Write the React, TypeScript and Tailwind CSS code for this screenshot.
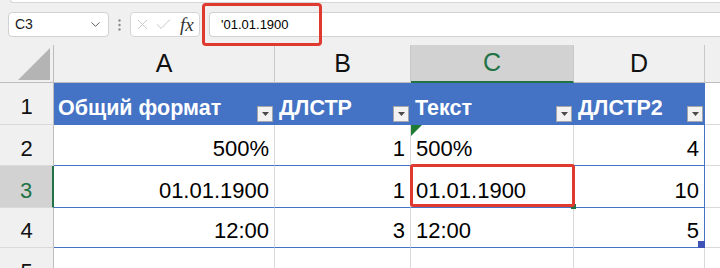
import { ChevronDown, X, Check } from "lucide-react";

const headers = ["Общий формат", "ДЛСТР", "Текст", "ДЛСТР2"];
const rows = [
  ["500%", "1", "500%", "4"],
  ["01.01.1900", "1", "01.01.1900", "10"],
  ["12:00", "3", "12:00", "5"],
];
const letters = ["A", "B", "C", "D"];
const rowHeights = ["h-[41px]", "h-[42px]", "h-[40px]"];

function FilterButton() {
  return (
    <div className="w-[16px] h-[16px] mb-[3px] mr-[2px] shrink-0 bg-[#f2f2f2] border border-[#a6a6a6] flex items-center justify-center">
      <svg width="7" height="4" viewBox="0 0 7 4">
        <path d="M0 0 L7 0 L3.5 4 Z" fill="#4a4a4a" />
      </svg>
    </div>
  );
}

export default function App() {
  return (
    <div
      className="relative w-[720px] h-[268px] overflow-hidden bg-white"
      style={{ fontFamily: '"Liberation Sans", Arial, sans-serif' }}
    >
      {/* formula bar */}
      <div className="h-[45px] bg-[#f0f0f0]">
        <div className="h-[3px] ml-[10px] bg-white border-b border-l border-[#d6d6d6] rounded-bl-[4px]" />
        <div className="flex mt-[9px] pl-[8px] h-[25px]">
          <div className="w-[101px] h-[25px] bg-white border border-[#d1d1d1] rounded-[4px] flex items-center justify-between pl-[6px] pr-[5px]">
            <span className="text-[14px] text-[#1a1a1a]">C3</span>
            <ChevronDown size={15} strokeWidth={1.5} color="#555" />
          </div>
          <div className="w-[21px] flex items-center justify-center">
            <svg width="3" height="12" viewBox="0 0 3 12">
              <circle cx="1.5" cy="1.5" r="1.2" fill="#8c8c8c" />
              <circle cx="1.5" cy="6" r="1.2" fill="#8c8c8c" />
              <circle cx="1.5" cy="10.5" r="1.2" fill="#8c8c8c" />
            </svg>
          </div>
          <div className="w-[70px] h-[25px] bg-white border border-[#d6d6d6] rounded-[4px] flex items-center pl-[3px]">
            <X size={17} strokeWidth={1.2} color="#c4c4c4" />
            <Check size={19} strokeWidth={1.2} color="#c4c4c4" className="ml-[3px]" />
            <span
              className="ml-[7px] text-[19px] italic text-[#333] leading-none"
              style={{ fontFamily: '"Liberation Serif", "Times New Roman", serif' }}
            >
              fx
            </span>
          </div>
          <div className="flex-1 ml-[9px] h-[25px] bg-white border-y border-l border-[#d1d1d1] rounded-l-[4px] flex items-center pl-[11px]">
            <span className="text-[13px] text-black">'01.01.1900</span>
          </div>
        </div>
      </div>

      {/* sheet */}
      <div className="grid grid-cols-[54px_221px_136px_163px_131px_1fr]">
        {/* column header row */}
        <div className="h-[38px] bg-[#f0f0f0] border-r border-b border-[#bdbdbd] flex items-end justify-end pr-[3px] pb-[2px]">
          <svg width="32" height="32" viewBox="0 0 32 32">
            <path d="M32 0 L32 32 L0 32 Z" fill="#b4b4b4" />
          </svg>
        </div>
        {letters.map((l) => {
          const sel = l === "C";
          return (
            <div
              key={l}
              className={
                sel
                  ? "h-[38px] bg-[#d2d2d2] border-r border-[#c8c8c8] border-b-2 border-b-[#217346] flex items-center justify-center text-[25px] text-[#217346]"
                  : "h-[38px] bg-[#f0f0f0] border-r border-b border-[#c8c8c8] border-b-[#bdbdbd] flex items-center justify-center text-[25px] text-[#111]"
              }
            >
              {l}
            </div>
          );
        })}
        <div className="h-[38px] bg-[#f0f0f0] border-b border-[#bdbdbd]" />

        {/* row 1: table header */}
        <div className="h-[42px] bg-[#f0f0f0] border-r border-r-[#bdbdbd] border-b border-b-[#d9d9d9] flex items-end justify-center pb-[6px] text-[22px] leading-none text-[#111]">
          1
        </div>
        {headers.map((h) => (
          <div key={h} className="h-[42px] bg-[#4472c4] flex items-end justify-between">
            <span className="pl-[4px] pb-[6px] text-[21.5px] leading-none font-bold text-white whitespace-nowrap">
              {h}
            </span>
            <FilterButton />
          </div>
        ))}
        <div className="h-[42px] border-b border-[#d9d9d9]" />

        {/* data rows */}
        {rows.map((r, i) => {
          const sel = i === 1;
          return [
            <div
              key={`h${i}`}
              className={
                (sel
                  ? "bg-[#d2d2d2] text-[#217346] border-r-2 border-r-[#217346] "
                  : "bg-[#f0f0f0] text-[#111] border-r border-r-[#bdbdbd] ") +
                rowHeights[i] +
                " border-b border-b-[#d9d9d9] flex items-end justify-center pb-[5px] text-[22px] leading-none"
              }
            >
              {i + 2}
            </div>,
            ...r.map((v, j) => (
              <div
                key={`c${i}${j}`}
                className={
                  rowHeights[i] +
                  (j === 3 ? " border-r border-r-[#4472c4]" : " border-r border-r-[#d9d9d9]") +
                  " border-b border-b-[#4472c4] flex items-end pb-[5px] text-[22px] leading-none text-black " +
                  (j === 2 ? "justify-start pl-[5px]" : "justify-end pr-[5px]")
                }
              >
                {v}
              </div>
            )),
            <div key={`e${i}`} className={rowHeights[i] + " border-b border-[#d9d9d9]"} />,
          ];
        })}

        {/* row 5 */}
        <div className="h-[40px] bg-[#f0f0f0] border-r border-r-[#bdbdbd] flex items-end justify-center pb-[5px] text-[22px] leading-none text-[#111]">
          5
        </div>
        {letters.map((l) => (
          <div key={`r5${l}`} className="h-[40px] border-r border-[#d9d9d9]" />
        ))}
        <div className="h-[40px]" />
      </div>

      {/* overlays */}
      <div className="absolute left-[202px] top-[3px] w-[120px] h-[43px] border-[3px] border-[#e0392f] rounded-[4px]" />
      <svg className="absolute left-[411px] top-[125px]" width="11" height="11" viewBox="0 0 11 11">
        <path d="M0 0 L11 0 L0 11 Z" fill="#1e7b34" />
      </svg>
      <div className="absolute left-[571px] top-[204px] w-[5px] h-[5px] bg-[#217346]" />
      <div className="absolute left-[410px] top-[164px] w-[165px] h-[43px] border-[3px] border-[#e0392f] rounded-[3px]" />
      <div className="absolute left-[698px] top-[241px] w-[7px] h-[7px] bg-[#3f52b8]" />
    </div>
  );
}
